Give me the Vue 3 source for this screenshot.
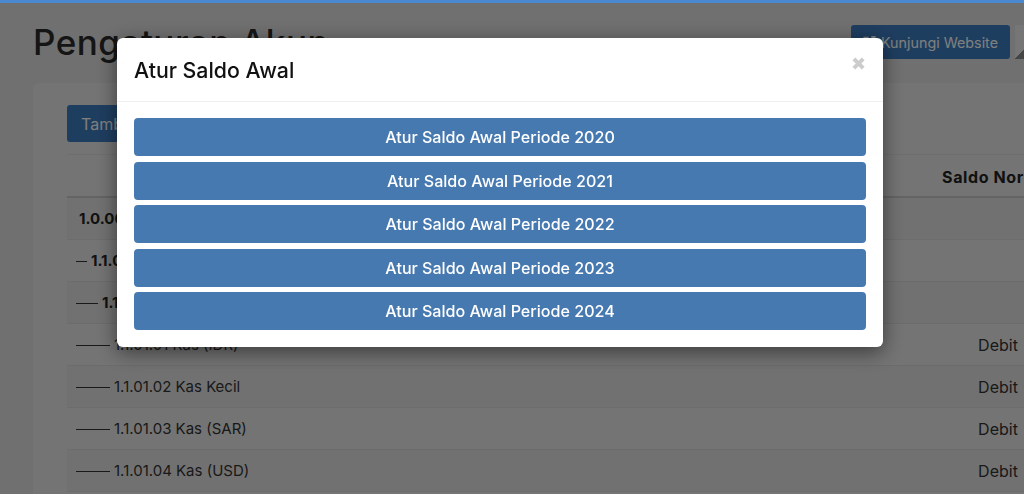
<script setup>
const years = [2020, 2021, 2022, 2023, 2024]
const rows = [
  { indent: 0, code: '1.0.00 Aset', bold: true, normal: '' },
  { indent: 1, code: '1.1.00 Aset Lancar', bold: true, normal: '' },
  { indent: 2, code: '1.1.01 Kas', bold: true, normal: '' },
  { indent: 3, code: '1.1.01.01 Kas (IDR)', bold: false, normal: 'Debit' },
  { indent: 3, code: '1.1.01.02 Kas Kecil', bold: false, normal: 'Debit' },
  { indent: 3, code: '1.1.01.03 Kas (SAR)', bold: false, normal: 'Debit' },
  { indent: 3, code: '1.1.01.04 Kas (USD)', bold: false, normal: 'Debit' },
]
</script>

<template>
  <div class="page">
    <div class="topbar"></div>
    <div class="content">
      <div class="head">
        <h1>Pengaturan Akun</h1>
        <a class="visit">
          <svg width="15" height="14" viewBox="0 0 16 16" fill="none" stroke="currentColor" stroke-width="2">
            <path d="M7 3H2v11h11V9" />
            <path d="M8 8l6-6M10 2h4v4" />
          </svg>
          Kunjungi Website
        </a>
        <div class="avatar"></div>
      </div>
      <div class="card">
        <button class="add">Tambah Akun</button>
        <table>
          <thead>
            <tr>
              <th></th>
              <th class="normal">Saldo Normal</th>
            </tr>
          </thead>
          <tbody>
            <tr v-for="(row, i) in rows" :key="row.code" :class="{ odd: i % 2 == 0 }">
              <td :class="{ bold: row.bold }">
                <span class="dash" :class="'d' + row.indent"></span>{{ row.code }}
              </td>
              <td class="normal">{{ row.normal }}</td>
            </tr>
          </tbody>
        </table>
      </div>
    </div>
  </div>

  <div class="overlay">
    <div class="modal">
      <div class="modal-head">
        <h5>Atur Saldo Awal</h5>
        <span class="close">✖</span>
      </div>
      <div class="modal-body">
        <button v-for="y in years" :key="y" class="period">Atur Saldo Awal Periode {{ y }}</button>
      </div>
    </div>
  </div>
</template>

<style>
html, body {
  margin: 0;
  height: 494px;
  overflow: hidden;
}
</style>

<style scoped>
.page {
  height: 494px;
  overflow: hidden;
  background: #e0e0e0;
  font-family: Inter, "Noto Sans", sans-serif;
  color: #333;
}
.topbar {
  height: 3px;
  background: #4a88d0;
  position: relative;
  z-index: 2;
}
.content {
  padding: 22px 0 0 33px;
  width: 1064px;
}
.head {
  display: flex;
  align-items: center;
  height: 34px;
}
h1 {
  margin: 0;
  font-size: 35px;
  font-weight: 500;
  color: #2b2b2b;
  letter-spacing: 0.5px;
}
.visit {
  margin-left: auto;
  width: 159px;
  height: 34px;
  box-sizing: border-box;
  padding-left: 11px;
  display: flex;
  align-items: center;
  gap: 4px;
  background: #3d7cc0;
  border-radius: 3px;
  color: #fff;
  font-size: 14.3px;
}
.avatar {
  width: 82px;
  height: 34px;
  margin-left: 5px;
  background: linear-gradient(135deg, #ececec 29%, #8a8a8a 29%);
}
.card {
  margin-top: 24px;
  padding: 22px 34px;
  background: #e8e8e8;
  border-radius: 6px;
  height: 400px;
}
.add {
  display: block;
  height: 37px;
  width: 130px;
  border: none;
  border-radius: 3px;
  background: #3d7cc0;
  color: #fff;
  font: inherit;
  font-size: 16px;
  text-align: left;
  padding-left: 14px;
}
table {
  width: 100%;
  margin-top: 12px;
  border-collapse: collapse;
  font-size: 15px;
}
th {
  height: 39px;
  padding: 2px 0 0;
  font-weight: 700;
  color: #222;
  border-top: 1px solid #ddd;
  border-bottom: 2px solid #c8c8c8;
}
td {
  height: 41px;
  padding: 0 0 0 9px;
  border-bottom: 1px solid #d8d8d8;
  color: #333;
}
.odd td {
  background: #e3e3e3;
}
.bold {
  font-weight: 700;
  color: #222;
}
th.normal, td.normal {
  width: 130px;
  text-align: center;
}
th.normal {
  font-size: 16px;
  letter-spacing: 0.6px;
}
td.normal {
  padding: 0;
  font-size: 16px;
}
.dash {
  display: inline-block;
  height: 1px;
  background: #333;
  vertical-align: middle;
  margin-right: 4px;
}
.d0 { width: 0; margin-right: 3px; }
.d1 { width: 11px; }
.d2 { width: 22px; }
.d3 { width: 34px; }

.overlay {
  position: fixed;
  inset: 0;
  background: rgba(0, 0, 0, 0.5);
  padding: 38px 24px 0 0;
  box-sizing: border-box;
  display: flex;
  justify-content: center;
  align-items: flex-start;
  font-family: Inter, "Noto Sans", sans-serif;
}
.modal {
  width: 766px;
  background: #fff;
  border-radius: 6px;
  box-shadow: 0 5px 20px rgba(0, 0, 0, 0.5);
}
.modal-head {
  height: 64px;
  box-sizing: border-box;
  border-bottom: 1px solid #f0f0f0;
  padding: 0 17px;
  display: flex;
  justify-content: space-between;
}
h5 {
  margin: 20px 0 0;
  font-size: 21.3px;
  line-height: 24px;
  font-weight: 500;
  color: #111;
}
.close {
  font-size: 18px;
  line-height: 22px;
  color: #ccc;
  margin-top: 15px;
}
.modal-body {
  padding: 16px 17px 17px;
  display: flex;
  flex-direction: column;
  gap: 5.5px;
}
.period {
  height: 38px;
  border: none;
  border-radius: 4px;
  background: #4679b0;
  color: #fff;
  font: inherit;
  font-size: 16.1px;
  font-weight: 500;
}
</style>
